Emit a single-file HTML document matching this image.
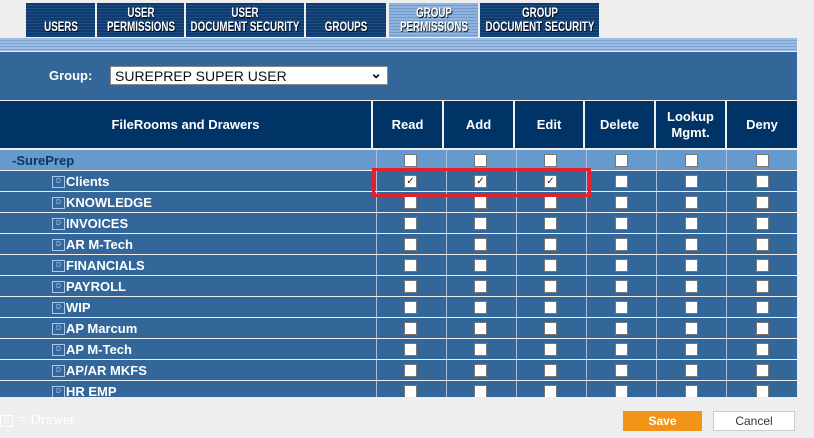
<!DOCTYPE html><html><head><meta charset="utf-8"><style>
body{margin:0;width:814px;height:438px;background:#eeeeee;font-family:"Liberation Sans",sans-serif;position:relative;overflow:hidden}
.tab{position:absolute;top:3px;height:34px;background:repeating-linear-gradient(#0f3a6e 0 2px,#1d4d85 2px 3px);color:#fff;font-weight:bold;font-size:14px;line-height:14px;text-align:center;box-sizing:border-box;text-shadow:1px 1px 1px #000;overflow:hidden}
.tab span{position:absolute;left:50%;bottom:4px;white-space:nowrap;transform:translateX(-50%) scaleX(0.7)}
.tab.on{background:repeating-linear-gradient(#8fb3dc 0 2px,#6f9ccd 2px 3px)}
.stripe{position:absolute;left:0;top:38px;width:797px;height:13px;background:repeating-linear-gradient(#9ebde0 0 2px,#7aa3d3 2px 3px)}
.grp{position:absolute;left:0;top:52px;width:797px;height:48px;background:#336699}
.hdr{position:absolute;top:101px;height:47px;background:#003366;color:#fff;font-weight:bold;font-size:13px;display:flex;align-items:center;justify-content:center;text-align:center;line-height:16px}
.row{position:absolute;left:0;width:797px;height:20px;background:#336699}
.cell{position:absolute;top:0;height:20px;border-left:1px solid #a9c0dc}
.cb{position:absolute;width:11px;height:11px;background:#fff;border:1px solid #777;top:4px;font-size:10px;line-height:11px;text-align:center;color:#222}
.lbl{position:absolute;left:52px;top:3px;color:#fff;font-weight:bold;font-size:13px;white-space:nowrap}
.ic{display:inline-block;width:11px;height:10px;border:1px solid #a9c8f0;font-size:7px;line-height:10px;text-align:center;color:#a9c8f0;vertical-align:top;margin-top:2px;margin-right:1px;font-weight:normal}
</style></head><body>
<div class="tab" style="left:26px;width:69px"><span>USERS</span></div>
<div class="tab" style="left:97px;width:87px"><span>USER<br>PERMISSIONS</span></div>
<div class="tab" style="left:186px;width:118px"><span>USER<br>DOCUMENT SECURITY</span></div>
<div class="tab" style="left:306px;width:80px"><span>GROUPS</span></div>
<div class="tab on" style="left:389px;width:89px"><span>GROUP<br>PERMISSIONS</span></div>
<div class="tab" style="left:480px;width:119px"><span>GROUP<br>DOCUMENT SECURITY</span></div>
<div class="stripe"></div>
<div class="grp">
<div style="position:absolute;left:49px;top:16px;color:#fff;font-weight:bold;font-size:13px">Group:</div>
<div style="position:absolute;left:110px;top:14px;width:278px;height:19px;background:#fff;border:1px solid #888;font-size:14px;line-height:19px;padding-left:4px;box-sizing:border-box;color:#111">SUREPREP SUPER USER<span style="position:absolute;right:5px;top:-3px;font-size:14px;font-weight:bold">&#8964;</span></div>
</div>
<div class="hdr" style="left:0;width:371px">FileRooms and Drawers</div>
<div class="hdr" style="left:373px;width:69px">Read</div>
<div class="hdr" style="left:444px;width:69px">Add</div>
<div class="hdr" style="left:515px;width:68px">Edit</div>
<div class="hdr" style="left:585px;width:69px">Delete</div>
<div class="hdr" style="left:656px;width:69px">Lookup<br>Mgmt.</div>
<div class="hdr" style="left:727px;width:70px">Deny</div>
<div id="rows"></div>
<div style="position:absolute;left:0;top:397px;width:814px;height:41px;background:#eeeeee"></div>
<div style="position:absolute;left:0;top:412px;color:#fff;font-family:'Liberation Serif',serif;font-size:15px;white-space:nowrap"><span class="ic" style="border-color:#fff;color:#fff;margin-top:3px">D</span> = Drawer</div>
<div style="position:absolute;left:623px;top:411px;width:79px;height:20px;background:#f39418;color:#fff;font-weight:bold;font-size:12px;text-align:center;line-height:20px">Save</div>
<div style="position:absolute;left:713px;top:411px;width:82px;height:20px;background:#fff;border:1px solid #ccc;box-sizing:border-box;color:#333;font-size:12px;text-align:center;line-height:18px">Cancel</div>
<div style="position:absolute;left:372px;top:168px;width:219px;height:29px;border:3px solid #e3202b;box-sizing:border-box"></div>
<script>
var names=["Clients","KNOWLEDGE","INVOICES","AR M-Tech","FINANCIALS","PAYROLL","WIP","AP Marcum","AP M-Tech","AP/AR MKFS","HR EMP"];
var cx=[376,446,516,586,656,726],cc=[410,480,550,621,691,762];
var h='';
function row(top,bg,label,chk){
h+='<div class="row" style="top:'+top+'px;background:'+bg+'">';
for(var i=0;i<6;i++){h+='<div class="cell" style="left:'+cx[i]+'px"></div>';h+='<div class="cb" style="left:'+(cc[i]-6)+'px">'+(chk&&i<3?'&#10003;':'')+'</div>';}
h+=label+'</div>';}
row(150,'#6699cc','<div class="lbl" style="left:12px;color:#0d3466">-SurePrep</div>',false);
for(var k=0;k<names.length;k++){row(171+k*21,'#336699','<div class="lbl"><span class="ic">D</span>'+names[k]+'</div>',k==0);}
document.getElementById('rows').innerHTML=h;
</script>
</body></html>
